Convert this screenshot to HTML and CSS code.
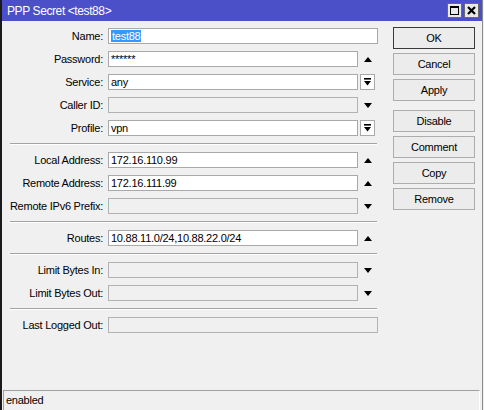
FILE: index.html
```html
<!DOCTYPE html>
<html>
<head>
<meta charset="utf-8">
<link rel="stylesheet" href="styles.css">
</head>
<body>
<div class="window">
  <div class="titlebar">
    <span class="title">PPP Secret &lt;test88&gt;</span>
    <div class="tbtns">
      <span class="tbtn"><i class="maxbox"></i></span>
      <span class="tbtn">
        <svg width="9" height="9" viewBox="0 0 9 9"><path d="M1 1L8 8M8 1L1 8" stroke="#000" stroke-width="2.2"/></svg>
      </span>
    </div>
  </div>
  <div class="main">
    <div class="form">
      <div class="group">
        <div class="row"><span class="lbl">Name:</span><div class="ctl"><div class="field wide"><span class="sel">test88</span></div></div></div>
        <div class="row"><span class="lbl">Password:</span><div class="ctl"><div class="field">******</div><span class="arr"><svg width="8" height="5" viewBox="0 0 8 5"><path d="M0 5L4 0L8 5Z"/></svg></span></div></div>
        <div class="row"><span class="lbl">Service:</span><div class="ctl"><div class="field">any</div><span class="dd"><svg width="9" height="8" viewBox="0 0 9 8"><rect x="1" y="0" width="7" height="1.6"/><path d="M1 3H8L4.5 7.5Z"/></svg></span></div></div>
        <div class="row"><span class="lbl">Caller ID:</span><div class="ctl"><div class="field dis"></div><span class="arr"><svg width="8" height="5" viewBox="0 0 8 5"><path d="M0 0L8 0L4 5Z"/></svg></span></div></div>
        <div class="row"><span class="lbl">Profile:</span><div class="ctl"><div class="field">vpn</div><span class="dd"><svg width="9" height="8" viewBox="0 0 9 8"><rect x="1" y="0" width="7" height="1.6"/><path d="M1 3H8L4.5 7.5Z"/></svg></span></div></div>
      </div>
      <div class="sep"></div>
      <div class="group">
        <div class="row"><span class="lbl">Local Address:</span><div class="ctl"><div class="field">172.16.110.99</div><span class="arr"><svg width="8" height="5" viewBox="0 0 8 5"><path d="M0 5L4 0L8 5Z"/></svg></span></div></div>
        <div class="row"><span class="lbl">Remote Address:</span><div class="ctl"><div class="field">172.16.111.99</div><span class="arr"><svg width="8" height="5" viewBox="0 0 8 5"><path d="M0 5L4 0L8 5Z"/></svg></span></div></div>
        <div class="row"><span class="lbl">Remote IPv6 Prefix:</span><div class="ctl"><div class="field dis"></div><span class="arr"><svg width="8" height="5" viewBox="0 0 8 5"><path d="M0 0L8 0L4 5Z"/></svg></span></div></div>
      </div>
      <div class="sep"></div>
      <div class="group">
        <div class="row"><span class="lbl">Routes:</span><div class="ctl"><div class="field">10.88.11.0/24,10.88.22.0/24</div><span class="arr"><svg width="8" height="5" viewBox="0 0 8 5"><path d="M0 5L4 0L8 5Z"/></svg></span></div></div>
      </div>
      <div class="sep"></div>
      <div class="group">
        <div class="row"><span class="lbl">Limit Bytes In:</span><div class="ctl"><div class="field dis"></div><span class="arr"><svg width="8" height="5" viewBox="0 0 8 5"><path d="M0 0L8 0L4 5Z"/></svg></span></div></div>
        <div class="row"><span class="lbl">Limit Bytes Out:</span><div class="ctl"><div class="field dis"></div><span class="arr"><svg width="8" height="5" viewBox="0 0 8 5"><path d="M0 0L8 0L4 5Z"/></svg></span></div></div>
      </div>
      <div class="sep"></div>
      <div class="group">
        <div class="row"><span class="lbl">Last Logged Out:</span><div class="ctl"><div class="field dis wide"></div></div></div>
      </div>
    </div>
    <div class="buttons">
      <div class="btngroup">
        <span class="btn default">OK</span>
        <span class="btn">Cancel</span>
        <span class="btn">Apply</span>
      </div>
      <div class="btngroup">
        <span class="btn">Disable</span>
        <span class="btn">Comment</span>
        <span class="btn">Copy</span>
        <span class="btn">Remove</span>
      </div>
    </div>
  </div>
  <div class="status"><div class="statusbox">enabled</div></div>
</div>
</body>
</html>
```

FILE: styles.css
```css
html, body {
  margin: 0;
  padding: 0;
  background: #f0f0f0;
}
body {
  font-family: "Liberation Sans", Arial, sans-serif;
  font-size: 11px;
  letter-spacing: -0.25px;
  color: #000;
}
.window {
  width: 480px;
  height: 410px;
  display: flex;
  flex-direction: column;
  background: #f0f0f0;
  border-left: 2px solid #1a1a1a;
  border-right: 1px solid #8c8c8c;
  box-sizing: content-box;
}
.titlebar {
  height: 21px;
  flex: none;
  background: #4b4fc8;
  display: flex;
  align-items: center;
  justify-content: space-between;
  padding: 0 3px 0 5px;
}
.title {
  color: #fff;
  font-size: 12px;
  letter-spacing: -0.4px;
}
.tbtns {
  display: flex;
  gap: 2px;
}
.tbtn {
  width: 13px;
  height: 13px;
  background: #e9e9e9;
  border: 1px solid #6a6a6a;
  display: flex;
  align-items: center;
  justify-content: center;
}
.maxbox {
  display: block;
  width: 7px;
  height: 6px;
  border: 1.5px solid #000;
  border-top-width: 2px;
}
.main {
  flex: 1;
  display: flex;
  padding-top: 6px;
  gap: 15px;
}
.form {
  width: 376px;
  padding-top: 1px;
  display: flex;
  flex-direction: column;
}
.group {
  display: flex;
  flex-direction: column;
  gap: 7px;
}
.row {
  display: flex;
  align-items: center;
  height: 16px;
}
.lbl {
  width: 101px;
  flex: none;
  text-align: right;
  white-space: nowrap;
}
.ctl {
  margin-left: 5px;
  width: 270px;
  display: flex;
  align-items: center;
  height: 16px;
}
.field {
  width: 250px;
  height: 16px;
  box-sizing: border-box;
  background: #fff;
  border: 1px solid #a9a9a9;
  padding: 0 2px;
  line-height: 14px;
  white-space: nowrap;
  overflow: hidden;
}
.field.wide {
  width: 270px;
}
.field.dis {
  background: #f0f0f0;
  border-color: #b2b2b2;
}
.sel {
  background: #3399ff;
  color: #fff;
  padding: 0 1px;
}
.arr {
  width: 20px;
  display: flex;
  justify-content: center;
  align-items: center;
}
.arr svg, .dd svg {
  fill: #000;
}
.dd {
  margin-left: 2px;
  width: 15px;
  height: 16px;
  box-sizing: border-box;
  border: 1px solid #a9a9a9;
  background: #fff;
  display: flex;
  justify-content: center;
  align-items: center;
}
.sep {
  margin: 7px 1px 7px 8px;
  border-top: 1px solid #a3a3a3;
  border-bottom: 1px solid #fff;
}
.buttons {
  width: 82px;
  display: flex;
  flex-direction: column;
  gap: 9px;
}
.btngroup {
  display: flex;
  flex-direction: column;
  gap: 4px;
}
.btn {
  height: 22px;
  box-sizing: border-box;
  border: 1px solid #adadad;
  background: #ececec;
  display: flex;
  align-items: center;
  justify-content: center;
}
.btn.default {
  border-color: #3a3a3a;
}
.status {
  height: 20px;
  flex: none;
  padding: 0 2px 0 1px;
}
.statusbox {
  height: 20px;
  box-sizing: border-box;
  border-top: 1px solid #a0a0a0;
  border-left: 1px solid #a0a0a0;
  border-right: 1px solid #fff;
  padding: 3px 0 0 2px;
}
```
